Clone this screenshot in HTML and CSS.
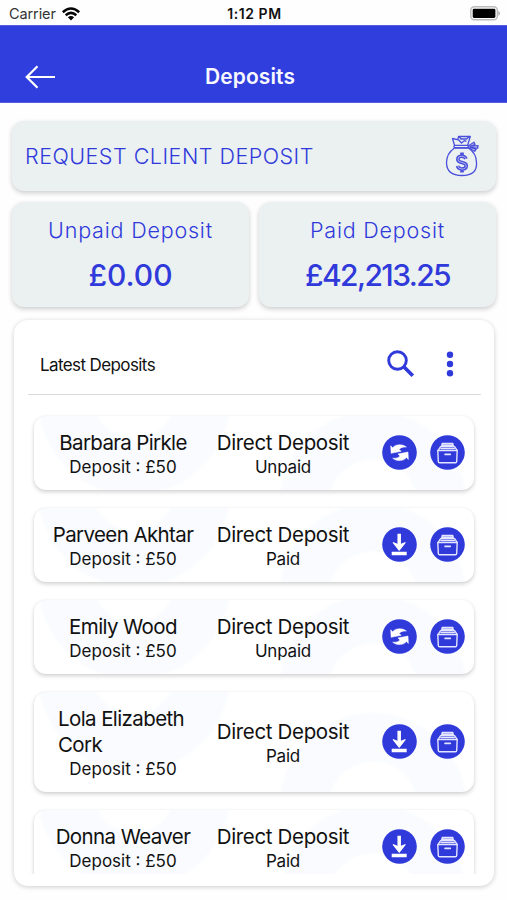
FILE: index.html
```html
<!DOCTYPE html>
<html lang="en">
<head>
<meta charset="utf-8">
<title>Deposits</title>
<link rel="stylesheet" href="styles.css">
</head>
<body>
<svg class="defs" width="0" height="0" aria-hidden="true">
  <symbol id="sync" viewBox="0 0 35 35">
    <circle cx="17.5" cy="17.5" r="17.3" fill="#303adb"/>
    <path fill="#fff" stroke="#fff" stroke-width=".5" d="M8.700 10.800l2 1.900c2.600-3.400 9.400-4.300 13.700-.6-3.300-.4-6.100.5-7.200 2.300l2 1.900-10.100 2zM26.400 24.500l-2-1.900c-2.600 3.400-9.400 4.300-13.700.6 3.300.4 6.100-.5 7.200-2.300l-2-1.900 10.100-2z"/>
  </symbol>
  <symbol id="download" viewBox="0 0 35 35">
    <circle cx="17.500" cy="17.500" r="17.300" fill="#303adb"/>
    <path fill="none" stroke="#fff" stroke-width="3.500" d="M17.200 6.700v14M9.700 26.500h15"/>
    <path fill="#fff" stroke="#fff" stroke-width="1.200" stroke-linejoin="round" d="M11.300 15.700l5.900 2.300 5.900-2.300-5.900 7.300z"/>
  </symbol>
  <symbol id="archive" viewBox="0 0 35 35">
    <circle cx="17.500" cy="17.500" r="17.300" fill="#303adb"/>
    <g fill="none" stroke="#e4e5ff" stroke-width="1.400" stroke-linejoin="round" stroke-linecap="round">
      <path d="M7.800 15.500h19.400l-.5 11q-.1 1.200-1.300 1.200H9.600q-1.200 0-1.300-1.200z"/>
      <path d="M8.200 15.300l2.200-3.500h14.400l2.300 3.500M12.200 11.500V8.500h10.600v3M11.500 10.200h12M11 13.600h13.300"/>
      <path stroke-width="1.600" d="M15 19.400h5.300"/>
    </g>
  </symbol>
</svg>
<div class="status">
  <span class="carrier">Carrier</span>
  <svg class="wifi" width="18" height="14" viewBox="0 0 18 14"><g fill="none" stroke="#050505" stroke-width="2.500"><path d="M.8 5.200Q9-2.200 17.200 5.200"/><path d="M3.700 8.200q5.300-4.700 10.600 0"/></g><path d="M5.900 10.200q3.100-2.500 6.200 0L9 13.500z" fill="#050505"/></svg>
  <span class="clock">1:12 PM</span>
  <svg class="battery" width="31" height="15" viewBox="0 0 31 15"><rect x=".8" y=".8" width="26.500" height="13" rx="3.500" fill="#fff" stroke="#bbb" stroke-width="1.400"/><rect x="2.700" y="2.700" width="22.700" height="9.200" rx="1.300"/><path d="M28.300 4.500q3.200 2.800 0 5.600z" fill="#aaa"/></svg>
</div>
<header class="header">
  <svg class="back" width="31" height="24" viewBox="0 0 31 24"><path d="M30 12H2M12.500 1.200L1.700 12l10.800 10.800" fill="none" stroke="#fff" stroke-width="2.200"/></svg>
  <h1>Deposits</h1>
</header>
<main>
  <section class="tile request">
    <span class="request-label">REQUEST CLIENT DEPOSIT</span>
    <svg width="34" height="42" viewBox="0 0 34 42" fill="none" stroke="#4a50dc" stroke-width="1.300" stroke-linejoin="round">
      <path d="M9.500 13Q1.500 18.500 1.500 27.500 1.500 40.500 17 40.500T31.500 27.500q0-9-8-14.500z"/>
      <path d="M9.500 12.700q-1.500-1.500.5-2.400h12q2.500.4.800 2.400zM9.500 10.300L7.500 3.500l6 1.300 3 3.200 2.800-2.300 2.200.6M12.800 4.600l.7-3.300 11.800.2-2.600 8.500M14 1.500l2 2.500h5.500l3-2.500M23.500 10.700l5.500-3.500 1 2.200-5 2 8-.8-.3 2.500-7.700-.7 6 2-1.300 1.900-6.500-3.500"/>
      <path stroke-width="3.600" d="M21 23.900q-1-2.700-4.200-2.700-4 0-4 3 0 2.500 4 3.200 4.500.7 4.500 3.400 0 3.200-4.300 3.200-3.700 0-4.500-3.100M17 17.500v3.700M17 34v3.500"/>
      <path stroke="#c5c9ee" stroke-width=".8" d="M21 23.900q-1-2.700-4.200-2.700-4 0-4 3 0 2.500 4 3.200 4.500.7 4.500 3.400 0 3.200-4.300 3.200-3.700 0-4.500-3.100"/>
    </svg>
  </section>
  <div class="totals">
    <section class="tile total"><span class="total-label">Unpaid Deposit</span><strong>£0.00</strong></section>
    <section class="tile total"><span class="total-label">Paid Deposit</span><strong class="paid">£42,213.25</strong></section>
  </div>
  <section class="panel">
    <div class="panel-head">
      <h2>Latest Deposits</h2>
      <svg class="search" width="28" height="28" viewBox="0 0 28 28" fill="none" stroke="#303adb"><circle cx="10.500" cy="10.500" r="8.800" stroke-width="2.900"/><path d="M16.800 16.800l9 9" stroke-width="3.700"/></svg>
      <svg width="8" height="26" viewBox="0 0 8 26" fill="#303adb"><circle cx="4" cy="3.800" r="3.200"/><circle cx="4" cy="13" r="3.200"/><circle cx="4" cy="22.200" r="3.200"/></svg>
    </div>
    <div class="list">
      <article class="row">
        <div class="client"><span class="name barbara">Barbara Pirkle</span><span class="sub amount">Deposit : £50</span></div>
        <div class="kind"><span class="name direct">Direct Deposit</span><span class="sub">Unpaid</span></div>
        <svg class="action"><use href="#sync"/></svg><svg class="action"><use href="#archive"/></svg>
      </article>
      <article class="row">
        <div class="client"><span class="name">Parveen Akhtar</span><span class="sub amount">Deposit : £50</span></div>
        <div class="kind"><span class="name direct">Direct Deposit</span><span class="sub">Paid</span></div>
        <svg class="action"><use href="#download"/></svg><svg class="action"><use href="#archive"/></svg>
      </article>
      <article class="row">
        <div class="client"><span class="name">Emily Wood</span><span class="sub amount">Deposit : £50</span></div>
        <div class="kind"><span class="name direct">Direct Deposit</span><span class="sub">Unpaid</span></div>
        <svg class="action"><use href="#sync"/></svg><svg class="action"><use href="#archive"/></svg>
      </article>
      <article class="row">
        <div class="client"><span class="name wrapped">Lola Elizabeth Cork</span><span class="sub amount">Deposit : £50</span></div>
        <div class="kind"><span class="name direct">Direct Deposit</span><span class="sub">Paid</span></div>
        <svg class="action"><use href="#download"/></svg><svg class="action"><use href="#archive"/></svg>
      </article>
      <article class="row">
        <div class="client"><span class="name">Donna Weaver</span><span class="sub amount">Deposit : £50</span></div>
        <div class="kind"><span class="name direct">Direct Deposit</span><span class="sub">Paid</span></div>
        <svg class="action"><use href="#download"/></svg><svg class="action"><use href="#archive"/></svg>
      </article>
    </div>
  </section>
</main>
</body>
</html>
```
FILE: styles.css
```css
* { box-sizing: border-box; }
body { margin: 0; height: 900px; overflow: hidden; background: #fefefe; font-family: Inter, "Liberation Sans", sans-serif; color: #111; }
svg { display: block; flex: none; }
.defs { position: absolute; }
.status { height: 25px; display: grid; grid-template-columns: 53px 1fr auto 1fr; align-items: center; padding: 2px 6px 0 9px; }
.carrier { font-size: 14.500px; letter-spacing: -0.1px; color: #333; }
.clock { font-size: 14px; font-weight: 600; letter-spacing: 0.55px; margin-left: -54px; }
.battery { justify-self: end; }
.header { height: 78px; background: #303edd; border-top: 1px solid #5660dc; border-bottom: 1px solid #555fdf; display: grid; grid-template-columns: 31px 1fr 31px; align-items: center; padding: 26px 32px 0 25px; }
h1 { margin: 0; text-align: center; color: #f8f8ff; font-size: 21px; line-height: 26px; font-weight: 600; letter-spacing: .1px; }
main { padding: 18px 11px 0 12px; }
.tile { background: #ebf0f1; border-radius: 12px; box-shadow: 0 2px 5px rgba(0,0,0,.2); color: #303adb; }
.request { height: 70px; display: flex; align-items: center; justify-content: space-between; padding: 0 17px 0 13px; }
.request-label { font-size: 21.500px; font-weight: 350; letter-spacing: .5px; white-space: nowrap; }
.totals { display: grid; grid-template-columns: 1fr 1fr; gap: 10px; margin-top: 11px; }
.total { height: 105px; display: flex; flex-direction: column; align-items: center; padding-top: 14px; }
.total-label { font-size: 21.500px; line-height: 28px; font-weight: 350; letter-spacing: .8px; }
.total strong { font-size: 30px; line-height: 36px; font-weight: 450; margin-top: 13px; }
.total .paid { letter-spacing: -1.6px; }
.panel { margin: 13px 2px 0; height: 566px; background: #fff; border-radius: 14px; box-shadow: 0 1px 5px rgba(0,0,0,.2); padding: 12px 13px 0 14px; }
.panel-head { height: 63px; border-bottom: 1.500px solid #dcdcdc; display: flex; align-items: center; padding: 2px 27px 0 12px; }
h2 { margin: 1px auto 0 0; font-size: 17px; font-weight: 400; letter-spacing: -.6px; }
.search { margin-right: 31px; }
.list { height: 479px; overflow: hidden; display: flex; flex-direction: column; gap: 18px; padding: 21px 7px 0 6px; }
.row { flex: none; min-height: 74px; display: flex; align-items: center; padding: 13px 9px 13px 12px; border-radius: 12px; box-shadow: 0 2px 4px rgba(0,0,0,.18), 0 0 2px rgba(0,0,0,.06); background: radial-gradient(circle at 100px -17px, transparent 38px, #f9fbfe 42px 94px, transparent 98px), radial-gradient(circle at 339px calc(100% + 14px), transparent 43px, #f9fbfe 46px 91px, transparent 95px), #fff; }
.client, .kind { display: flex; flex-direction: column; align-items: center; width: 154px; padding-top: 1px; margin-bottom: -1px; }
.kind { width: 166px; margin-right: 16px; }
.name { font-size: 20.500px; line-height: 26px; letter-spacing: -.6px; }
.direct { letter-spacing: -.35px; }
.barbara { letter-spacing: -.65px; }
.sub { font-size: 17px; line-height: 22px; letter-spacing: -.2px; }
.amount { letter-spacing: 0; }
.wrapped { width: 130px; }
.action { width: 35px; height: 35px; margin-top: -1px; }
.action + .action { margin-left: 13px; }
```
